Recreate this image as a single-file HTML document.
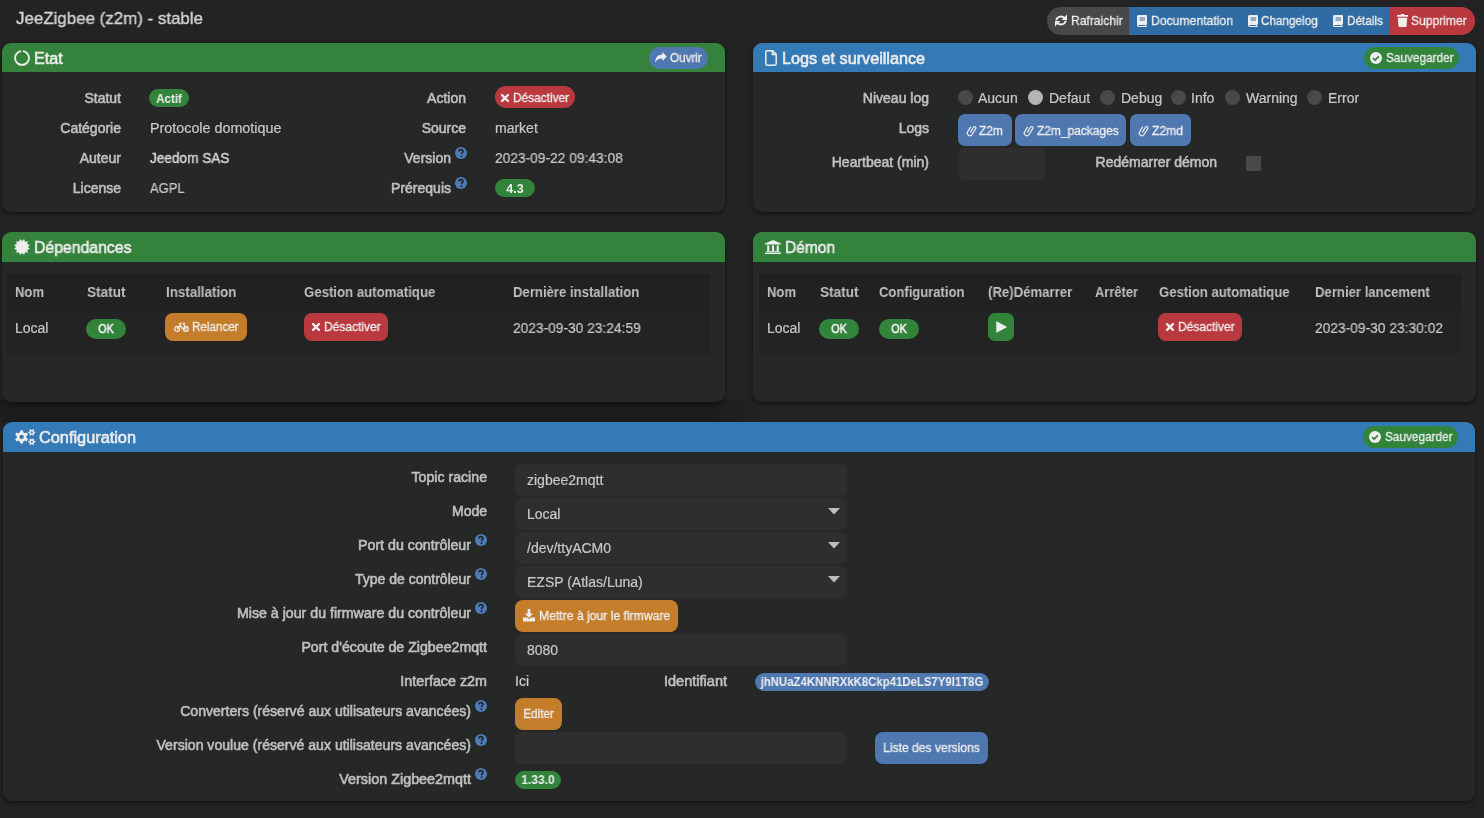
<!DOCTYPE html>
<html><head><meta charset="utf-8"><title>JeeZigbee (z2m) - stable</title>
<style>
html,body{margin:0;padding:0;width:1484px;height:818px;overflow:hidden;background:#232323}
body{position:relative;font-family:"Liberation Sans",sans-serif}
div,svg{position:absolute;box-sizing:border-box}
.t{white-space:nowrap;line-height:1;will-change:transform}
.m{-webkit-text-stroke:0.6px currentColor}
.r{-webkit-text-stroke:0.2px currentColor}
.h{-webkit-text-stroke:0.4px currentColor}
.bt{-webkit-text-stroke:0.3px currentColor}
.b{font-weight:bold}
.th{font-weight:bold}
.panel{border-radius:9px;overflow:hidden;box-shadow:0 2px 4px rgba(0,0,0,.45)}
</style></head><body>
<div style="left:0px;top:0px;width:1484px;height:818px;background:#232323;border-radius:0px;"></div>
<div class="t h" style="left:16px;top:10px;font-size:17px;color:#d2d2d2;transform:scaleX(0.9945);transform-origin:left 0;">JeeZigbee (z2m) - stable</div>
<div style="left:1047px;top:7px;width:428px;height:28px;border-radius:14px;overflow:hidden"><div style="left:0;top:0;width:82px;height:28px;background:#48484a"></div><div style="left:82px;top:0;width:261px;height:28px;background:#306ca3"></div><div style="left:343px;top:0;width:85px;height:28px;background:#b9393f"></div></div>
<svg style="left:1055px;top:14px;width:12px;height:13px" viewBox="0 0 12 13" fill="#eeeeee"><path d="M10.2 4.9A4.9 4.9 0 0 0 1.2 6.4" stroke="#eee" stroke-width="1.9" fill="none"/><path d="M12 .4V5.9H6.5Z"/><path d="M1.8 8.1A4.9 4.9 0 0 0 10.8 6.6" stroke="#eee" stroke-width="1.9" fill="none"/><path d="M0 12.6V7.1H5.5Z"/></svg>
<div class="t bt" style="left:1071px;top:14px;font-size:13px;color:#eeeeee;transform:scaleX(0.9294);transform-origin:left 0;">Rafraichir</div>
<svg style="left:1137px;top:14.5px;width:10px;height:12px" viewBox="0 0 10 12" fill="#eeeeee"><path d="M1.5 0H9.2Q10 0 10 .8V8.8Q10 9.5 9.3 9.6V11H9.8V12H1.8Q0 12 0 10.2V1.5Q0 0 1.5 0ZM1.8 10Q1.2 10 1.2 10.6Q1.2 11 1.8 11H8.3V10ZM2.6 2.6V3.6H8V2.6ZM2.6 4.6V5.6H8V4.6Z" fill-rule="evenodd"/></svg>
<div class="t bt" style="left:1151px;top:14px;font-size:13px;color:#eeeeee;transform:scaleX(0.9376);transform-origin:left 0;">Documentation</div>
<svg style="left:1248px;top:14.5px;width:10px;height:12px" viewBox="0 0 10 12" fill="#eeeeee"><path d="M1.5 0H9.2Q10 0 10 .8V8.8Q10 9.5 9.3 9.6V11H9.8V12H1.8Q0 12 0 10.2V1.5Q0 0 1.5 0ZM1.8 10Q1.2 10 1.2 10.6Q1.2 11 1.8 11H8.3V10ZM2.6 2.6V3.6H8V2.6ZM2.6 4.6V5.6H8V4.6Z" fill-rule="evenodd"/></svg>
<div class="t bt" style="left:1261.3px;top:14px;font-size:13px;color:#eeeeee;transform:scaleX(0.9016);transform-origin:left 0;">Changelog</div>
<svg style="left:1333px;top:14.5px;width:10px;height:12px" viewBox="0 0 10 12" fill="#eeeeee"><path d="M1.5 0H9.2Q10 0 10 .8V8.8Q10 9.5 9.3 9.6V11H9.8V12H1.8Q0 12 0 10.2V1.5Q0 0 1.5 0ZM1.8 10Q1.2 10 1.2 10.6Q1.2 11 1.8 11H8.3V10ZM2.6 2.6V3.6H8V2.6ZM2.6 4.6V5.6H8V4.6Z" fill-rule="evenodd"/></svg>
<div class="t bt" style="left:1347px;top:14px;font-size:13px;color:#eeeeee;transform:scaleX(0.9031);transform-origin:left 0;">Détails</div>
<svg style="left:1397px;top:14px;width:11px;height:13px" viewBox="0 0 11 13" fill="#eeeeee"><path d="M0 .9H3.4L4 0H7L7.6.9H11V2.7H0Z"/><path d="M.8 3.8H10.2L9.6 12Q9.5 13 8.5 13H2.5Q1.5 13 1.4 12Z"/></svg>
<div class="t bt" style="left:1411.4px;top:14px;font-size:13px;color:#eeeeee;transform:scaleX(0.9271);transform-origin:left 0;">Supprimer</div>
<div class="panel" style="left:2px;top:43px;width:723px;height:169px;background:#262828"><div style="left:0;top:0;width:723px;height:29px;background:#34823b"></div></div>
<svg style="left:14px;top:50px;width:16px;height:16px" viewBox="0 0 16 16" fill="none"><path d="M7.1 1.15A6.9 6.9 0 1 0 8.9 1.15" stroke="#eee" stroke-width="1.8" fill="none"/></svg>
<div class="t m" style="left:34px;top:51px;font-size:16px;color:#ececec;transform:scaleX(1.0116);transform-origin:left 0;">Etat</div>
<div style="left:649px;top:47px;width:59px;height:22px;background:#4f78b0;border-radius:11px;"></div>
<svg style="left:655px;top:52px;width:12px;height:11px" viewBox="0 0 12 11" fill="#eeeeee"><path d="M11.8 4.4L7.4 0V2.4C3.4 2.6 .4 4.6 0 11C1.6 7.6 3.8 6.6 7.4 6.6V8.9Z"/></svg>
<div class="t bt" style="left:670.2px;top:52px;font-size:12.5px;color:#eeeeee;transform:scaleX(0.9344);transform-origin:left 0;">Ouvrir</div>
<div class="t m" style="left:-479px;width:600px;text-align:right;top:91px;font-size:14px;color:#bfbfbf;">Statut</div>
<div class="t m" style="left:-479px;width:600px;text-align:right;top:121px;font-size:14px;color:#bfbfbf;">Catégorie</div>
<div class="t m" style="left:-479px;width:600px;text-align:right;top:151px;font-size:14px;color:#bfbfbf;">Auteur</div>
<div class="t m" style="left:-479px;width:600px;text-align:right;top:181px;font-size:14px;color:#bfbfbf;">License</div>
<div style="left:149px;top:89px;width:40px;height:18px;background:#33843b;border-radius:9.0px;"></div>
<div class="t b" style="left:-51px;width:440px;text-align:center;top:93px;font-size:12px;color:#eeeeee;transform:scaleX(0.9673);transform-origin:center 0;">Actif</div>
<div class="t r" style="left:149.5px;top:121px;font-size:14px;color:#c9c9c9;transform:scaleX(1.0232);transform-origin:left 0;">Protocole domotique</div>
<div class="t h" style="left:149.5px;top:151px;font-size:14px;color:#d8d8d8;transform:scaleX(0.9728);transform-origin:left 0;">Jeedom SAS</div>
<div class="t r" style="left:149.5px;top:181px;font-size:14px;color:#c9c9c9;transform:scaleX(0.9288);transform-origin:left 0;">AGPL</div>
<div class="t m" style="left:-134px;width:600px;text-align:right;top:91px;font-size:14px;color:#bfbfbf;">Action</div>
<div class="t m" style="left:-134px;width:600px;text-align:right;top:121px;font-size:14px;color:#bfbfbf;">Source</div>
<div class="t m" style="left:-149px;width:600px;text-align:right;top:151px;font-size:14px;color:#bfbfbf;">Version</div>
<svg style="left:455px;top:147px;width:12px;height:12px" viewBox="0 0 12 12" fill="none"><circle cx="6" cy="6" r="6" fill="#4f7cb9"/><path d="M4 4.5C4 3.3 4.9 2.6 6 2.6S8 3.3 8 4.4C8 5.6 6.5 5.8 6.5 7.2" stroke="#23262a" stroke-width="1.6" fill="none"/><circle cx="6.5" cy="9.2" r="1" fill="#23262a"/></svg>
<div class="t m" style="left:-149px;width:600px;text-align:right;top:181px;font-size:14px;color:#bfbfbf;">Prérequis</div>
<svg style="left:455px;top:177px;width:12px;height:12px" viewBox="0 0 12 12" fill="none"><circle cx="6" cy="6" r="6" fill="#4f7cb9"/><path d="M4 4.5C4 3.3 4.9 2.6 6 2.6S8 3.3 8 4.4C8 5.6 6.5 5.8 6.5 7.2" stroke="#23262a" stroke-width="1.6" fill="none"/><circle cx="6.5" cy="9.2" r="1" fill="#23262a"/></svg>
<div style="left:495px;top:86px;width:80px;height:22px;background:#b9393f;border-radius:11px;"></div>
<svg style="left:501px;top:94px;width:8px;height:8px" viewBox="0 0 8 8" fill="none"><path d="M1 1L7 7M7 1L1 7" stroke="#eeeeee" stroke-width="2.4" stroke-linecap="square"/></svg>
<div class="t bt" style="left:513px;top:92px;font-size:12.5px;color:#eeeeee;transform:scaleX(0.9484);transform-origin:left 0;">Désactiver</div>
<div class="t r" style="left:495px;top:121px;font-size:14px;color:#c9c9c9;">market</div>
<div class="t r" style="left:495px;top:151px;font-size:14px;color:#c9c9c9;transform:scaleX(0.9831);transform-origin:left 0;">2023-09-22 09:43:08</div>
<div style="left:495px;top:179px;width:40px;height:18px;background:#33843b;border-radius:9.0px;"></div>
<div class="t b" style="left:295px;width:440px;text-align:center;top:183px;font-size:12.5px;color:#eeeeee;">4.3</div>
<div class="panel" style="left:753px;top:43px;width:723px;height:169px;background:#262828"><div style="left:0;top:0;width:723px;height:29px;background:#347ab7"></div></div>
<svg style="left:765px;top:50px;width:12px;height:16px" viewBox="0 0 12 16" fill="none"><path d="M2 .8H7.6L11.2 4.4V13.8Q11.2 15.2 9.8 15.2H2.2Q.8 15.2 .8 13.8V2.2Q.8.8 2 .8Z" stroke="#eee" stroke-width="1.5" fill="none"/><path d="M7.4 1V4.6H11" stroke="#eee" stroke-width="1.5" fill="none"/></svg>
<div class="t m" style="left:781.6px;top:51px;font-size:16px;color:#ececec;transform:scaleX(1.0112);transform-origin:left 0;">Logs et surveillance</div>
<div style="left:1364px;top:47px;width:95px;height:22px;background:#33843b;border-radius:11px;"></div>
<svg style="left:1370px;top:52px;width:12px;height:12px" viewBox="0 0 12 12" fill="none"><circle cx="6" cy="6" r="6" fill="#eee"/><path d="M3.1 6.1L5.1 8.1L8.9 4.3" stroke="#33843b" stroke-width="1.8" fill="none"/></svg>
<div class="t bt" style="left:1385.5px;top:52px;font-size:12.5px;color:#eeeeee;transform:scaleX(0.9430);transform-origin:left 0;">Sauvegarder</div>
<div class="t m" style="left:329px;width:600px;text-align:right;top:91px;font-size:14px;color:#bfbfbf;">Niveau log</div>
<div class="t m" style="left:329px;width:600px;text-align:right;top:121px;font-size:14px;color:#bfbfbf;">Logs</div>
<div class="t m" style="left:329px;width:600px;text-align:right;top:155px;font-size:14px;color:#bfbfbf;">Heartbeat (min)</div>
<div style="left:958px;top:90px;width:15px;height:15px;background:#48494b;border-radius:7.5px;"></div>
<div class="t r" style="left:978px;top:91px;font-size:14px;color:#c9c9c9;">Aucun</div>
<div style="left:1028px;top:90px;width:15px;height:15px;background:#b4b4b4;border-radius:7.5px;"></div>
<div class="t r" style="left:1048.5px;top:91px;font-size:14px;color:#c9c9c9;">Defaut</div>
<div style="left:1100px;top:90px;width:15px;height:15px;background:#48494b;border-radius:7.5px;"></div>
<div class="t r" style="left:1120.5px;top:91px;font-size:14px;color:#c9c9c9;">Debug</div>
<div style="left:1171px;top:90px;width:15px;height:15px;background:#48494b;border-radius:7.5px;"></div>
<div class="t r" style="left:1191px;top:91px;font-size:14px;color:#c9c9c9;">Info</div>
<div style="left:1225px;top:90px;width:15px;height:15px;background:#48494b;border-radius:7.5px;"></div>
<div class="t r" style="left:1246px;top:91px;font-size:14px;color:#c9c9c9;">Warning</div>
<div style="left:1307px;top:90px;width:15px;height:15px;background:#48494b;border-radius:7.5px;"></div>
<div class="t r" style="left:1328px;top:91px;font-size:14px;color:#c9c9c9;">Error</div>
<div style="left:958px;top:114px;width:54px;height:32px;background:#4f78b0;border-radius:7px;"></div>
<svg style="left:966px;top:124px;width:11px;height:13px" viewBox="0 0 11 13" fill="none"><path transform="rotate(32 5.5 6.5)" d="M2.9 4.2V9.6A2.6 2.6 0 0 0 8.1 9.6V2.7A1.3 1.3 0 0 0 5.5 2.7V8.4" stroke="#eeeeee" stroke-width="1.2" fill="none" stroke-linecap="round"/></svg>
<div class="t bt" style="left:979.4px;top:125px;font-size:12.5px;color:#eeeeee;transform:scaleX(0.9520);transform-origin:left 0;">Z2m</div>
<div style="left:1015px;top:114px;width:111px;height:32px;background:#4f78b0;border-radius:7px;"></div>
<svg style="left:1023px;top:124px;width:11px;height:13px" viewBox="0 0 11 13" fill="none"><path transform="rotate(32 5.5 6.5)" d="M2.9 4.2V9.6A2.6 2.6 0 0 0 8.1 9.6V2.7A1.3 1.3 0 0 0 5.5 2.7V8.4" stroke="#eeeeee" stroke-width="1.2" fill="none" stroke-linecap="round"/></svg>
<div class="t bt" style="left:1036.6px;top:125px;font-size:12.5px;color:#eeeeee;transform:scaleX(0.9559);transform-origin:left 0;">Z2m_packages</div>
<div style="left:1130px;top:114px;width:61px;height:32px;background:#4f78b0;border-radius:7px;"></div>
<svg style="left:1138px;top:124px;width:11px;height:13px" viewBox="0 0 11 13" fill="none"><path transform="rotate(32 5.5 6.5)" d="M2.9 4.2V9.6A2.6 2.6 0 0 0 8.1 9.6V2.7A1.3 1.3 0 0 0 5.5 2.7V8.4" stroke="#eeeeee" stroke-width="1.2" fill="none" stroke-linecap="round"/></svg>
<div class="t bt" style="left:1151.6px;top:125px;font-size:12.5px;color:#eeeeee;transform:scaleX(0.9702);transform-origin:left 0;">Z2md</div>
<div style="left:958px;top:148px;width:87px;height:32px;background:#2e2e2e;border-radius:7px;"></div>
<div class="t m" style="left:617.3px;width:600px;text-align:right;top:155px;font-size:14px;color:#bfbfbf;">Redémarrer démon</div>
<div style="left:1246px;top:156px;width:15px;height:15px;background:#48494b;border-radius:1px;"></div>
<div style="left:0;top:400px;width:765px;height:22px;background:linear-gradient(to right,rgba(0,0,0,.2) 0,rgba(0,0,0,.2) 93%,rgba(0,0,0,0) 100%)"></div>
<div class="panel" style="left:2px;top:232px;width:723px;height:170px;background:#262828"><div style="left:0;top:0;width:723px;height:30px;background:#34823b"></div></div>
<svg style="left:14px;top:239px;width:16px;height:16px" viewBox="0 0 16 16" fill="#eeeeee"><path d="M10.12 0.08L11.00 2.80L13.80 2.20L13.20 5.00L15.92 5.88L14.00 8.00L15.92 10.12L13.20 11.00L13.80 13.80L11.00 13.20L10.12 15.92L8.00 14.00L5.88 15.92L5.00 13.20L2.20 13.80L2.80 11.00L0.08 10.12L2.00 8.00L0.08 5.88L2.80 5.00L2.20 2.20L5.00 2.80L5.88 0.08L8.00 2.00Z"/></svg>
<div class="t m" style="left:33.5px;top:240px;font-size:16px;color:#ececec;transform:scaleX(0.9873);transform-origin:left 0;">Dépendances</div>
<div style="left:7px;top:274px;width:703px;height:36px;background:#212121;border-radius:0px;"></div>
<div style="left:7px;top:310px;width:703px;height:44px;background:#232323;border-radius:0px;"></div>
<div class="t th" style="left:15.4px;top:285px;font-size:14px;color:#bfbfbf;transform:scaleX(0.9317);transform-origin:left 0;">Nom</div>
<div class="t th" style="left:86.7px;top:285px;font-size:14px;color:#bfbfbf;transform:scaleX(0.9705);transform-origin:left 0;">Statut</div>
<div class="t th" style="left:165.6px;top:285px;font-size:14px;color:#bfbfbf;transform:scaleX(0.9526);transform-origin:left 0;">Installation</div>
<div class="t th" style="left:303.7px;top:285px;font-size:14px;color:#bfbfbf;transform:scaleX(0.9430);transform-origin:left 0;">Gestion automatique</div>
<div class="t th" style="left:513.3px;top:285px;font-size:14px;color:#bfbfbf;transform:scaleX(0.9384);transform-origin:left 0;">Dernière installation</div>
<div class="t r" style="left:15.4px;top:321px;font-size:14px;color:#c9c9c9;">Local</div>
<div style="left:86px;top:319px;width:40px;height:20px;background:#33843b;border-radius:10.0px;"></div>
<div class="t m" style="left:-114px;width:440px;text-align:center;top:323px;font-size:12.5px;color:#eeeeee;transform:scaleX(0.8581);transform-origin:center 0;">OK</div>
<div style="left:165px;top:313px;width:82px;height:28px;background:#c47d2a;border-radius:8px;"></div>
<svg style="left:173.5px;top:321.5px;width:15px;height:10px" viewBox="0 0 15 10" fill="none"><circle cx="3.1" cy="6.9" r="2.4" stroke="#eee" stroke-width="1.3" fill="none"/><circle cx="11.9" cy="6.9" r="2.4" stroke="#eee" stroke-width="1.3" fill="none"/><path d="M3.1 6.9L6.3 3.4L8.6 6.9H11.9L9.4 1.3H11M5.2 1.4H7.6M6.3 3.4L5.6 1.4" stroke="#eee" stroke-width="1.3" fill="none"/></svg>
<div class="t bt" style="left:192.1px;top:321px;font-size:12.5px;color:#eeeeee;transform:scaleX(0.9314);transform-origin:left 0;">Relancer</div>
<div style="left:304px;top:313px;width:84px;height:28px;background:#b9393f;border-radius:8px;"></div>
<svg style="left:312px;top:322.5px;width:8px;height:8px" viewBox="0 0 8 8" fill="none"><path d="M1 1L7 7M7 1L1 7" stroke="#eeeeee" stroke-width="2.4" stroke-linecap="square"/></svg>
<div class="t bt" style="left:323.6px;top:321px;font-size:12.5px;color:#eeeeee;transform:scaleX(0.9586);transform-origin:left 0;">Désactiver</div>
<div class="t r" style="left:513.3px;top:321px;font-size:14px;color:#c9c9c9;transform:scaleX(0.9823);transform-origin:left 0;">2023-09-30 23:24:59</div>
<div class="panel" style="left:753px;top:232px;width:723px;height:170px;background:#262828"><div style="left:0;top:0;width:723px;height:30px;background:#34823b"></div></div>
<svg style="left:765px;top:240px;width:16px;height:14px" viewBox="0 0 16 14" fill="#eeeeee"><path d="M8 0L16 3.4V4.6H0V3.4Z"/><rect x="2.2" y="5.4" width="2.1" height="5.6"/><rect x="6.95" y="5.4" width="2.1" height="5.6"/><rect x="11.7" y="5.4" width="2.1" height="5.6"/><rect x="1.2" y="11.2" width="13.6" height="1"/><rect x="0" y="12.6" width="16" height="1.4"/></svg>
<div class="t m" style="left:785.4px;top:240px;font-size:16px;color:#ececec;transform:scaleX(0.9694);transform-origin:left 0;">Démon</div>
<div style="left:758.5px;top:274px;width:702.5px;height:36px;background:#212121;border-radius:0px;"></div>
<div style="left:758.5px;top:310px;width:702.5px;height:44px;background:#232323;border-radius:0px;"></div>
<div class="t th" style="left:766.5px;top:285px;font-size:14px;color:#bfbfbf;transform:scaleX(0.9317);transform-origin:left 0;">Nom</div>
<div class="t th" style="left:820px;top:285px;font-size:14px;color:#bfbfbf;transform:scaleX(0.9705);transform-origin:left 0;">Statut</div>
<div class="t th" style="left:879.3px;top:285px;font-size:14px;color:#bfbfbf;transform:scaleX(0.9306);transform-origin:left 0;">Configuration</div>
<div class="t th" style="left:987.7px;top:285px;font-size:14px;color:#bfbfbf;transform:scaleX(0.9421);transform-origin:left 0;">(Re)Démarrer</div>
<div class="t th" style="left:1094.8px;top:285px;font-size:14px;color:#bfbfbf;transform:scaleX(0.9207);transform-origin:left 0;">Arrêter</div>
<div class="t th" style="left:1158.5px;top:285px;font-size:14px;color:#bfbfbf;transform:scaleX(0.9373);transform-origin:left 0;">Gestion automatique</div>
<div class="t th" style="left:1315.2px;top:285px;font-size:14px;color:#bfbfbf;transform:scaleX(0.9388);transform-origin:left 0;">Dernier lancement</div>
<div class="t r" style="left:766.5px;top:321px;font-size:14px;color:#c9c9c9;">Local</div>
<div style="left:819px;top:319px;width:40px;height:20px;background:#33843b;border-radius:10.0px;"></div>
<div class="t m" style="left:619px;width:440px;text-align:center;top:323px;font-size:12.5px;color:#eeeeee;transform:scaleX(0.8581);transform-origin:center 0;">OK</div>
<div style="left:879px;top:319px;width:40px;height:20px;background:#33843b;border-radius:10.0px;"></div>
<div class="t m" style="left:679px;width:440px;text-align:center;top:323px;font-size:12.5px;color:#eeeeee;transform:scaleX(0.8581);transform-origin:center 0;">OK</div>
<div style="left:988px;top:313px;width:26px;height:28px;background:#33843b;border-radius:7px;"></div>
<svg style="left:995.5px;top:320.5px;width:11px;height:12px" viewBox="0 0 11 12" fill="#eeeeee"><path d="M.3 .8Q.3 0 1 .4L10.4 5.6Q11 6 10.4 6.4L1 11.6Q.3 12 .3 11.2Z"/></svg>
<div style="left:1158px;top:313px;width:84px;height:28px;background:#b9393f;border-radius:8px;"></div>
<svg style="left:1166px;top:322.5px;width:8px;height:8px" viewBox="0 0 8 8" fill="none"><path d="M1 1L7 7M7 1L1 7" stroke="#eeeeee" stroke-width="2.4" stroke-linecap="square"/></svg>
<div class="t bt" style="left:1177.6px;top:321px;font-size:12.5px;color:#eeeeee;transform:scaleX(0.9586);transform-origin:left 0;">Désactiver</div>
<div class="t r" style="left:1315.2px;top:321px;font-size:14px;color:#c9c9c9;transform:scaleX(0.9846);transform-origin:left 0;">2023-09-30 23:30:02</div>
<div class="panel" style="left:3px;top:422px;width:1472px;height:379px;background:#262828"><div style="left:0;top:0;width:1472px;height:30px;background:#347ab7"></div></div>
<svg style="left:15px;top:429px;width:21px;height:17px" viewBox="0 0 21 17" fill="#eeeeee"><path d="M11.49 8.94L13.04 10.07L11.70 12.40L9.95 11.62L8.15 12.66L7.94 14.57L5.26 14.57L5.05 12.66L3.25 11.62L1.50 12.40L0.16 10.07L1.71 8.94L1.71 6.86L0.16 5.73L1.50 3.40L3.25 4.18L5.05 3.14L5.26 1.23L7.94 1.23L8.15 3.14L9.95 4.18L11.70 3.40L13.04 5.73L11.49 6.86ZM4.40 7.9a2.2 2.2 0 1 0 4.4 0a2.2 2.2 0 1 0 -4.4 0ZM19.18 2.63L20.23 2.71L20.23 4.09L19.18 4.17L18.66 5.07L19.11 6.03L17.92 6.72L17.32 5.85L16.28 5.85L15.68 6.72L14.49 6.03L14.94 5.07L14.42 4.17L13.37 4.09L13.37 2.71L14.42 2.63L14.94 1.73L14.49 0.77L15.68 0.08L16.28 0.95L17.32 0.95L17.92 0.08L19.11 0.77L18.66 1.73ZM15.70 3.4a1.1 1.1 0 1 0 2.2 0a1.1 1.1 0 1 0 -2.2 0ZM19.18 12.03L20.23 12.11L20.23 13.49L19.18 13.57L18.66 14.47L19.11 15.43L17.92 16.12L17.32 15.25L16.28 15.25L15.68 16.12L14.49 15.43L14.94 14.47L14.42 13.57L13.37 13.49L13.37 12.11L14.42 12.03L14.94 11.13L14.49 10.17L15.68 9.48L16.28 10.35L17.32 10.35L17.92 9.48L19.11 10.17L18.66 11.13ZM15.70 12.8a1.1 1.1 0 1 0 2.2 0a1.1 1.1 0 1 0 -2.2 0Z" fill-rule="evenodd"/></svg>
<div class="t m" style="left:39.4px;top:430px;font-size:16px;color:#ececec;transform:scaleX(1.0192);transform-origin:left 0;">Configuration</div>
<div style="left:1363px;top:426px;width:95px;height:22px;background:#33843b;border-radius:11px;"></div>
<svg style="left:1369px;top:431px;width:12px;height:12px" viewBox="0 0 12 12" fill="none"><circle cx="6" cy="6" r="6" fill="#eee"/><path d="M3.1 6.1L5.1 8.1L8.9 4.3" stroke="#33843b" stroke-width="1.8" fill="none"/></svg>
<div class="t bt" style="left:1384.5px;top:431px;font-size:12.5px;color:#eeeeee;transform:scaleX(0.9430);transform-origin:left 0;">Sauvegarder</div>
<div class="t m" style="left:-113px;width:600px;text-align:right;top:470px;font-size:14px;color:#bfbfbf;transform:scaleX(1.0107);transform-origin:right 0;">Topic racine</div>
<div class="t m" style="left:-113px;width:600px;text-align:right;top:504px;font-size:14px;color:#bfbfbf;">Mode</div>
<div class="t m" style="left:-129px;width:600px;text-align:right;top:538px;font-size:14px;color:#bfbfbf;transform:scaleX(1.0153);transform-origin:right 0;">Port du contrôleur</div>
<svg style="left:475px;top:534px;width:12px;height:12px" viewBox="0 0 12 12" fill="none"><circle cx="6" cy="6" r="6" fill="#4f7cb9"/><path d="M4 4.5C4 3.3 4.9 2.6 6 2.6S8 3.3 8 4.4C8 5.6 6.5 5.8 6.5 7.2" stroke="#23262a" stroke-width="1.6" fill="none"/><circle cx="6.5" cy="9.2" r="1" fill="#23262a"/></svg>
<div class="t m" style="left:-129px;width:600px;text-align:right;top:572px;font-size:14px;color:#bfbfbf;">Type de contrôleur</div>
<svg style="left:475px;top:568px;width:12px;height:12px" viewBox="0 0 12 12" fill="none"><circle cx="6" cy="6" r="6" fill="#4f7cb9"/><path d="M4 4.5C4 3.3 4.9 2.6 6 2.6S8 3.3 8 4.4C8 5.6 6.5 5.8 6.5 7.2" stroke="#23262a" stroke-width="1.6" fill="none"/><circle cx="6.5" cy="9.2" r="1" fill="#23262a"/></svg>
<div class="t m" style="left:-129px;width:600px;text-align:right;top:606px;font-size:14px;color:#bfbfbf;transform:scaleX(1.0125);transform-origin:right 0;">Mise à jour du firmware du contrôleur</div>
<svg style="left:475px;top:602px;width:12px;height:12px" viewBox="0 0 12 12" fill="none"><circle cx="6" cy="6" r="6" fill="#4f7cb9"/><path d="M4 4.5C4 3.3 4.9 2.6 6 2.6S8 3.3 8 4.4C8 5.6 6.5 5.8 6.5 7.2" stroke="#23262a" stroke-width="1.6" fill="none"/><circle cx="6.5" cy="9.2" r="1" fill="#23262a"/></svg>
<div class="t m" style="left:-113px;width:600px;text-align:right;top:640px;font-size:14px;color:#bfbfbf;transform:scaleX(1.0129);transform-origin:right 0;">Port d'écoute de Zigbee2mqtt</div>
<div class="t m" style="left:-113px;width:600px;text-align:right;top:674px;font-size:14px;color:#bfbfbf;transform:scaleX(1.0221);transform-origin:right 0;">Interface z2m</div>
<div class="t m" style="left:-129px;width:600px;text-align:right;top:704px;font-size:14px;color:#bfbfbf;transform:scaleX(1.0046);transform-origin:right 0;">Converters (réservé aux utilisateurs avancées)</div>
<svg style="left:475px;top:700px;width:12px;height:12px" viewBox="0 0 12 12" fill="none"><circle cx="6" cy="6" r="6" fill="#4f7cb9"/><path d="M4 4.5C4 3.3 4.9 2.6 6 2.6S8 3.3 8 4.4C8 5.6 6.5 5.8 6.5 7.2" stroke="#23262a" stroke-width="1.6" fill="none"/><circle cx="6.5" cy="9.2" r="1" fill="#23262a"/></svg>
<div class="t m" style="left:-129px;width:600px;text-align:right;top:738px;font-size:14px;color:#bfbfbf;transform:scaleX(1.0053);transform-origin:right 0;">Version voulue (réservé aux utilisateurs avancées)</div>
<svg style="left:475px;top:734px;width:12px;height:12px" viewBox="0 0 12 12" fill="none"><circle cx="6" cy="6" r="6" fill="#4f7cb9"/><path d="M4 4.5C4 3.3 4.9 2.6 6 2.6S8 3.3 8 4.4C8 5.6 6.5 5.8 6.5 7.2" stroke="#23262a" stroke-width="1.6" fill="none"/><circle cx="6.5" cy="9.2" r="1" fill="#23262a"/></svg>
<div class="t m" style="left:-129px;width:600px;text-align:right;top:772px;font-size:14px;color:#bfbfbf;transform:scaleX(1.0257);transform-origin:right 0;">Version Zigbee2mqtt</div>
<svg style="left:475px;top:768px;width:12px;height:12px" viewBox="0 0 12 12" fill="none"><circle cx="6" cy="6" r="6" fill="#4f7cb9"/><path d="M4 4.5C4 3.3 4.9 2.6 6 2.6S8 3.3 8 4.4C8 5.6 6.5 5.8 6.5 7.2" stroke="#23262a" stroke-width="1.6" fill="none"/><circle cx="6.5" cy="9.2" r="1" fill="#23262a"/></svg>
<div style="left:515px;top:464px;width:332px;height:32px;background:#2e2e2e;border-radius:7px;"></div>
<div class="t r" style="left:527px;top:473px;font-size:14px;color:#c9c9c9;">zigbee2mqtt</div>
<div style="left:515px;top:498px;width:332px;height:32px;background:#2e2e2e;border-radius:7px;"></div>
<div class="t r" style="left:527px;top:507px;font-size:14px;color:#c9c9c9;">Local</div>
<svg style="left:828px;top:508px;width:12px;height:7px" viewBox="0 0 12 7" fill="#bdbdbd"><path d="M0 0H12L6 6.5Z"/></svg>
<div style="left:515px;top:532px;width:332px;height:32px;background:#2e2e2e;border-radius:7px;"></div>
<div class="t r" style="left:527px;top:541px;font-size:14px;color:#c9c9c9;">/dev/ttyACM0</div>
<svg style="left:828px;top:542px;width:12px;height:7px" viewBox="0 0 12 7" fill="#bdbdbd"><path d="M0 0H12L6 6.5Z"/></svg>
<div style="left:515px;top:566px;width:332px;height:32px;background:#2e2e2e;border-radius:7px;"></div>
<div class="t r" style="left:527px;top:575px;font-size:14px;color:#c9c9c9;">EZSP (Atlas/Luna)</div>
<svg style="left:828px;top:576px;width:12px;height:7px" viewBox="0 0 12 7" fill="#bdbdbd"><path d="M0 0H12L6 6.5Z"/></svg>
<div style="left:515px;top:634px;width:332px;height:32px;background:#2e2e2e;border-radius:7px;"></div>
<div class="t r" style="left:527px;top:643px;font-size:14px;color:#c9c9c9;">8080</div>
<div style="left:515px;top:732px;width:332px;height:32px;background:#2e2e2e;border-radius:7px;"></div>
<div style="left:515px;top:600px;width:163px;height:32px;background:#c47d2a;border-radius:8px;"></div>
<svg style="left:523px;top:609px;width:12px;height:13px" viewBox="0 0 12 13" fill="#eeeeee"><path d="M4.6 0H7.4V4.6H10.2L6 8.8L1.8 4.6H4.6Z"/><path d="M0 8.6H4.3L6 10.3L7.7 8.6H12V12.6H0Z"/></svg>
<div class="t bt" style="left:538.8px;top:610px;font-size:12.5px;color:#eeeeee;transform:scaleX(0.9735);transform-origin:left 0;">Mettre à jour le firmware</div>
<div class="t r" style="left:514.5px;top:674px;font-size:14px;color:#d0d0d0;">Ici</div>
<div class="t m" style="left:663.8px;top:674px;font-size:14px;color:#bfbfbf;transform:scaleX(1.0376);transform-origin:left 0;">Identifiant</div>
<div style="left:755px;top:673px;width:234px;height:18px;background:#4f78b0;border-radius:9px;"></div>
<div class="t b" style="left:555px;width:634px;text-align:center;top:676px;font-size:12.5px;color:#eeeeee;transform:scaleX(0.9107);transform-origin:center 0;">jhNUaZ4KNNRXkK8Ckp41DeLS7Y9l1T8G</div>
<div style="left:515px;top:698px;width:47px;height:32px;background:#c47d2a;border-radius:8px;"></div>
<div class="t bt" style="left:315px;width:447px;text-align:center;top:708px;font-size:12.5px;color:#eeeeee;transform:scaleX(0.9401);transform-origin:center 0;">Editer</div>
<div style="left:875px;top:732px;width:113px;height:32px;background:#4f78b0;border-radius:8px;"></div>
<div class="t bt" style="left:675px;width:513px;text-align:center;top:742px;font-size:12.5px;color:#eeeeee;transform:scaleX(0.9664);transform-origin:center 0;">Liste des versions</div>
<div style="left:515px;top:771px;width:46px;height:18px;background:#33843b;border-radius:9.0px;"></div>
<div class="t b" style="left:315px;width:446px;text-align:center;top:774px;font-size:12.5px;color:#eeeeee;transform:scaleX(0.9550);transform-origin:center 0;">1.33.0</div>
</body></html>
